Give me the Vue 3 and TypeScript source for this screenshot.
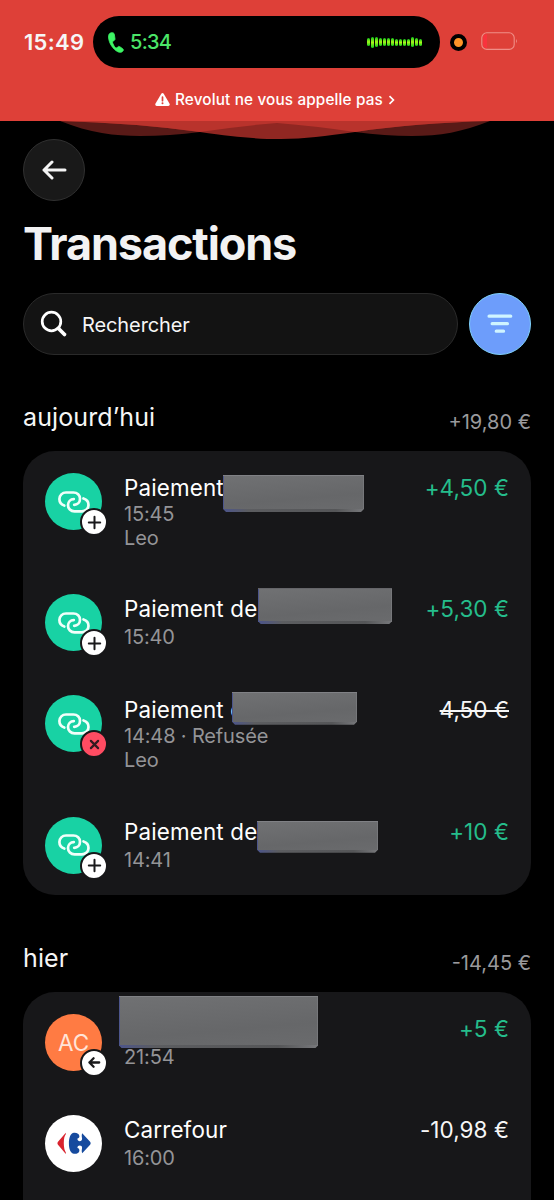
<script setup lang="ts">
interface Mask {
  left: number
  top: number
  width: number
  height: number
}

interface Transaction {
  title: string
  lines: string[]
  amount: string
  tone: 'credit' | 'debit' | 'refused'
  avatar: 'link' | 'initials' | 'store'
  badge?: 'plus' | 'cross' | 'back'
  mask?: Mask
}

interface Day {
  name: string
  total: string
  items: Transaction[]
}

const days: Day[] = [
  {
    name: 'aujourd’hui',
    total: '+19,80 €',
    items: [
      { title: 'Paiement', lines: ['15:45', 'Leo'], amount: '+4,50 €', tone: 'credit', avatar: 'link', badge: 'plus', mask: { left: 200, top: 24, width: 141, height: 37 } },
      { title: 'Paiement de', lines: ['15:40'], amount: '+5,30 €', tone: 'credit', avatar: 'link', badge: 'plus', mask: { left: 235, top: 16, width: 134, height: 36 } },
      { title: 'Paiement de', lines: ['14:48 · Refusée', 'Leo'], amount: '4,50 €', tone: 'refused', avatar: 'link', badge: 'cross', mask: { left: 209, top: 18.4, width: 125, height: 33 } },
      { title: 'Paiement de', lines: ['14:41'], amount: '+10 €', tone: 'credit', avatar: 'link', badge: 'plus', mask: { left: 234, top: 26, width: 121, height: 32 } },
    ],
  },
  {
    name: 'hier',
    total: '-14,45 €',
    items: [
      { title: '', lines: ['21:54'], amount: '+5 €', tone: 'credit', avatar: 'initials', badge: 'back', mask: { left: 96, top: 4, width: 199, height: 52.5 } },
      { title: 'Carrefour', lines: ['16:00'], amount: '-10,98 €', tone: 'debit', avatar: 'store' },
    ],
  },
]

const audioBars = [8, 11, 10, 8, 8, 8, 8, 7, 7, 7, 7, 10, 8, 7]

const box = (m: Mask) => ({
  left: `${m.left}px`,
  top: `${m.top}px`,
  width: `${m.width}px`,
  height: `${m.height}px`,
})
</script>

<template>
  <div class="screen">
    <header class="call-header">
      <div class="status">
        <span class="clock">15:49</span>
        <div class="island">
          <svg class="phone" width="16" height="21" viewBox="0 0 16 21">
            <path d="M3.100.8C1.300 1.200.5 2.600.5 5c.2 5.900 4.500 12.400 9.400 14.800 2.200 1 4.100.6 5.200-1 .5-.8.3-1.500-.4-2.100l-2.900-2c-.8-.5-1.500-.4-2.100.2l-.9.9c-.4.3-.8.3-1.200 0C6.300 14.600 5 12.300 4.500 10.300c-.1-.5 0-.9.5-1.100l1.100-.6c.7-.4 1-1 .9-1.800L6.300 2.200C6.100 1 4.900.4 3.100.8Z" fill="#3df565" stroke="#3df565" stroke-width=".8" />
          </svg>
          <span class="duration">5:34</span>
          <div class="audio">
            <i v-for="(h, i) in audioBars" :key="i" :style="{ height: h + 'px' }"></i>
          </div>
        </div>
        <span class="mic"></span>
        <svg class="battery" width="38" height="20" viewBox="0 0 38 20">
          <path d="M6 2.200H5.500Q2.200 2.200 2.200 5.500v7.200Q2.200 16 5.500 16H6Z" fill="#f9333d" />
          <rect x=".8" y=".8" width="32.400" height="16.600" rx="5" fill="none" stroke="#f08e87" stroke-width="1.100" />
          <path d="M35 6.800q1.700 2.200 0 4.600Z" fill="#f39a94" />
        </svg>
      </div>
      <div class="notice">
        <svg width="15" height="13" viewBox="0 0 15 13">
          <path d="M6.300.7Q7.500-.7 8.700.7L14.600 10.800Q15.100 12.800 13.300 13H1.700Q-.1 12.800.4 10.800Z" fill="#fff" />
          <path d="M7.500 4v3.700" stroke="#de4038" stroke-width="1.700" stroke-linecap="round" />
          <circle cx="7.500" cy="10.200" r="1" fill="#de4038" />
        </svg>
        <span>Revolut ne vous appelle pas</span>
        <svg class="chev" width="7" height="10" viewBox="0 0 7 10">
          <path d="M1.500 1.200 5.400 5 1.500 8.800" fill="none" stroke="#fff" stroke-width="1.700" />
        </svg>
      </div>
      <svg class="waves" width="554" height="20" viewBox="0 0 554 20">
        <path d="M60 0C90 12 115 15 140 15Q170 15 200 11Q240 5 277 2Q315 5 355 11Q385 15 412 15C440 15 462 11 490 0Z" fill="#591a17" />
        <path d="M60 0Q135 2 200 11C235 16 255 18 281 18C305 18 325 15 355 11Q415 2 490 0Z" fill="#902722" />
        <path d="M60 0Q135 2 200 11Q240 5 277 2Q315 5 355 11Q415 2 490 0Z" fill="#b9332c" />
      </svg>
    </header>

    <main>
      <button class="back" type="button" aria-label="Retour">
        <svg width="25" height="20" viewBox="0 0 25 20">
          <path d="M23 10H2M10 2 2 10l8 8" fill="none" stroke="#f4f4f4" stroke-width="3" stroke-linecap="round" stroke-linejoin="round" />
        </svg>
      </button>
      <h1>Transactions</h1>
      <div class="tools">
        <div class="search">
          <svg width="28" height="28" viewBox="0 0 28 28">
            <circle cx="11.500" cy="11.500" r="9.300" fill="none" stroke="#fff" stroke-width="2.700" />
            <path d="m18.500 18.500 6 6" stroke="#fff" stroke-width="3.700" stroke-linecap="round" />
          </svg>
          <span>Rechercher</span>
        </div>
        <button class="filter" type="button" aria-label="Filtrer">
          <svg width="26" height="20" viewBox="0 0 26 20">
            <path d="M2.100 2.200h21.600M5.200 9.700h15.200M9.300 17.200h7.200" stroke="#cff4ff" stroke-width="3.300" stroke-linecap="round" />
          </svg>
        </button>
      </div>

      <section v-for="day in days" :key="day.name" class="day">
        <div class="day-head">
          <h2>{{ day.name }}</h2>
          <span class="total">{{ day.total }}</span>
        </div>
        <div class="card">
          <article v-for="(t, i) in day.items" :key="i" class="row" :class="{ tall: t.lines.length > 1 }">
            <div class="avatar" :class="t.avatar">
              <svg v-if="t.avatar === 'link'" width="32" height="22" viewBox="0 0 32 22">
                <g fill="none" stroke="#f1fffa" stroke-width="2.700" stroke-linecap="round">
                  <path d="M6.300 14.500C3.300 13.500 1.400 11 1.400 8c0-3.700 2.900-6.500 6.600-6.500h7.500c3.700 0 6.500 2.800 6.500 6.300 0 3.400-2.500 6-5.800 6" />
                  <path d="M25.500 7.500c3 .9 5 3.300 5 6.400 0 3.700-2.900 6.500-6.600 6.500h-7.400c-3.700 0-6.500-2.800-6.500-6.300 0-3.400 2.500-6 5.800-6" />
                </g>
              </svg>
              <span v-else-if="t.avatar === 'initials'">AC</span>
              <svg v-else width="34" height="23" viewBox="0 0 34 23">
                <path d="M8.800.8V2.200Q6.800 4.500 6.800 11t2 9.300v1.600L.8 12.600Q0 11.300.8 10Z" fill="#d9232e" />
                <path d="M17 .7C20 .5 22.400 2 22.400 4.200c0 1.300-.8 2.100-1.900 2.300-.3 1.500.8 2.700 2.200 2.700 1.800 0 2.600-1.400 2.300-3.100-.3-1.700-.5-3.200.2-4.900l7.900 8.600q1.100 1.500 0 2.900l-7.900 8.500c-.7-1.700-.5-3.200-.2-4.800.3-1.800-.5-3-2.300-3-1.400 0-2.500 1.100-2.200 2.600 1.100.2 1.900 1.100 1.900 2.400 0 2.200-2.400 3.600-5.400 3.400-3.500-.3-5.100-5-5.100-10.500S13.500 1 17 .7Z" fill="#164a9e" />
              </svg>
              <span v-if="t.badge" class="badge" :class="t.badge">
                <svg v-if="t.badge === 'plus'" width="15" height="15" viewBox="0 0 15 15"><path d="M7.500 1.800v11.400M1.800 7.500h11.400" stroke="#19191b" stroke-width="2" stroke-linecap="round" /></svg>
                <svg v-else-if="t.badge === 'cross'" width="15" height="15" viewBox="0 0 15 15"><path d="m3.900 3.900 7.200 7.200m0-7.200-7.200 7.200" stroke="#341a20" stroke-width="2.200" stroke-linecap="round" /></svg>
                <svg v-else width="15" height="15" viewBox="0 0 15 15"><path d="M12.200 7.500H2.400m4.200-4.200L2.400 7.500l4.200 4.200" fill="none" stroke="#19191b" stroke-width="2.300" stroke-linecap="round" stroke-linejoin="round" /></svg>
              </span>
            </div>
            <div class="info">
              <p class="title">{{ t.title }}</p>
              <p v-for="line in t.lines" :key="line" class="sub">{{ line }}</p>
            </div>
            <span class="amount" :class="t.tone">{{ t.amount }}</span>
            <span v-if="t.mask" class="mask" :style="box(t.mask)"><i></i></span>
          </article>
        </div>
      </section>
    </main>
  </div>
</template>

<style>
html,
body {
  margin: 0;
  background: #000;
}
</style>

<style scoped>
* {
  box-sizing: border-box;
}
.screen {
  width: 554px;
  height: 1200px;
  overflow: hidden;
  background: #000;
  color: #f6f6f6;
  font-family: Inter, "Liberation Sans", sans-serif;
}
.call-header {
  position: relative;
  height: 121px;
  padding-top: 16px;
  background: #de4038;
}
.waves {
  position: absolute;
  left: 0;
  top: 121px;
}
.status {
  display: flex;
  align-items: center;
  height: 52px;
  padding-left: 24px;
}
.clock {
  width: 69px;
  font-size: 22px;
  font-weight: 600;
  letter-spacing: 0.3px;
  white-space: nowrap;
}
.island {
  display: flex;
  align-items: center;
  width: 347px;
  height: 52px;
  padding: 0 18px 0 15px;
  border-radius: 26px;
  background: #000;
}
.duration {
  margin-left: 6px;
  color: #4be568;
  font-size: 20px;
  font-weight: 500;
  letter-spacing: -0.7px;
}
.audio {
  display: flex;
  align-items: center;
  gap: 1px;
  margin-left: auto;
}
.audio i {
  width: 3px;
  border-radius: 1.5px;
  background: linear-gradient(#10cc18, #a8f51c 50%, #10cc18);
}
.mic {
  width: 17px;
  height: 17px;
  margin-left: 10px;
  border: 4.5px solid #000;
  border-radius: 50%;
  background: #ff9428;
}
.battery {
  margin-left: 14px;
}
.notice {
  display: flex;
  align-items: center;
  height: 20px;
  margin-top: 21px;
  padding-left: 155px;
  color: #fff;
  font-size: 15.3px;
  font-weight: 500;
  letter-spacing: 0.15px;
  white-space: nowrap;
}
.notice span {
  margin-left: 5px;
}
.notice svg {
  position: relative;
  top: 0.5px;
}
.chev {
  margin-left: 5px;
}
main {
  padding: 18px 23px 0;
}
button {
  display: flex;
  align-items: center;
  justify-content: center;
  width: 62px;
  height: 62px;
  flex: none;
  padding: 0;
  border-radius: 50%;
}
.back {
  border: 1px solid #303030;
  background: #191919;
}
h1 {
  margin: 16px 0 0;
  font-size: 45px;
  font-weight: 700;
  line-height: 54px;
  letter-spacing: -1.12px;
  color: #f2f2f3;
}
.tools {
  display: flex;
  gap: 11px;
  margin-top: 22px;
}
.search {
  display: flex;
  align-items: center;
  gap: 14px;
  width: 435px;
  height: 62px;
  padding-left: 16px;
  border: 1px solid #2a2a2a;
  border-radius: 31px;
  background: #131313;
  font-size: 20px;
  letter-spacing: -0.1px;
}
.search span {
  padding-top: 1px;
}
.filter {
  border: 1.5px solid #7fd0fa;
  background: #6d9dfb;
}
.day {
  padding-top: 46px;
}
.day + .day {
  padding-top: 47px;
}
.day-head {
  display: flex;
  align-items: flex-start;
  justify-content: space-between;
  height: 50px;
}
h2 {
  margin: 0;
  font-size: 25px;
  font-weight: 400;
  line-height: 32px;
  letter-spacing: 0.1px;
}
.total {
  margin-top: 9px;
  color: #9a9a9d;
  font-size: 20px;
  line-height: 24px;
}
.card {
  border-radius: 32px;
  background: #171719;
}
.day:last-child .card {
  height: 300px;
}
.row {
  position: relative;
  display: flex;
  align-items: flex-start;
  height: 101.1px;
  padding: 22px 22px 0;
}
.row.tall {
  height: 121.3px;
}
.row:last-child {
  height: 100.3px;
}
.avatar {
  position: relative;
  display: flex;
  align-items: center;
  justify-content: center;
  width: 57px;
  height: 57px;
  border-radius: 50%;
  background: #18d2a4;
}
.avatar.initials {
  background: #ff7b43;
  color: #ffe4d8;
  font-size: 22.5px;
}
.avatar.store {
  background: #fff;
}
.badge {
  position: absolute;
  right: -6px;
  bottom: -6px;
  display: flex;
  align-items: center;
  justify-content: center;
  width: 28px;
  height: 28px;
  border-radius: 50%;
  border: 2.5px solid #171719;
  background: #fff;
}
.badge.cross {
  background: #ff4c62;
}
.info {
  margin-left: 22px;
}
p {
  margin: 0;
  white-space: nowrap;
}
.title {
  height: 31px;
  font-size: 22.4px;
  font-weight: 400;
  line-height: 30px;
  letter-spacing: 0.16px;
  color: #fff;
}
.tall .title {
  height: 29px;
}
.sub {
  color: #949497;
  font-size: 20px;
  line-height: 24px;
  letter-spacing: -0.15px;
}
.amount {
  margin-left: auto;
  font-size: 22.5px;
  line-height: 30px;
  letter-spacing: 0.05px;
}
.credit {
  color: #25bd8b;
}
.refused {
  text-decoration: line-through;
  text-decoration-thickness: 2px;
}
.mask {
  position: absolute;
  padding: 0 1px 3px;
  clip-path: polygon(0 0, 100% 0, 100% calc(100% - 3px), calc(100% - 3px) 100%, 3px 100%, 0 calc(100% - 3px));
  background: linear-gradient(90deg, #4c558c, #5c5d60 18%, #555658 80%, #77787b);
  border-top: 1px solid #808185;
}
.mask i {
  display: block;
  height: 100%;
  background: linear-gradient(175deg, #707173, #666769 65%, #6a6b6d);
}
</style>
